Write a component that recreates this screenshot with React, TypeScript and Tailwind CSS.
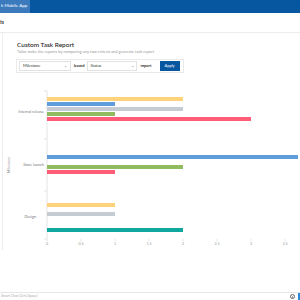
import React from "react";

const bars = [
  { y: 98, h: 4, v: 2, c: "#ffd27c" },
  { y: 103, h: 4, v: 1, c: "#5f9ddc" },
  { y: 108, h: 4, v: 2, c: "#c6ccd4" },
  { y: 113, h: 4, v: 1, c: "#90bb5f" },
  { y: 118, h: 4, v: 3, c: "#ff5d78" },
  { y: 156, h: 4, v: 4, c: "#5f9ddc" },
  { y: 166, h: 4, v: 2, c: "#90bb5f" },
  { y: 171, h: 4, v: 1, c: "#ff5d78" },
  { y: 204, h: 4, v: 1, c: "#ffd27c" },
  { y: 213, h: 4, v: 1, c: "#c6ccd4" },
  { y: 229, h: 4, v: 2, c: "#10a89e" },
];

const OFF = 80;
const X0 = 47;
const U = 68;

export default function App() {
  return (
    <div
      className="w-[300px] h-[300px] overflow-hidden bg-white flex flex-col"
      style={{ fontFamily: "Lato, 'Liberation Sans', sans-serif" }}
    >
      <div className="h-[13px] bg-[#0656a0] flex shrink-0">
        <div className="w-[30px] bg-[#3a7abd] flex items-center pl-[1px] text-[4.5px] text-white whitespace-nowrap overflow-hidden">
          k Mobile App
        </div>
      </div>
      <div className="h-[20px] border-b border-[#ececec] flex items-center text-[5px] font-bold text-[#333] pl-0 shrink-0">
        ts
      </div>
      <div className="ml-[2px] border-l border-[#eeeeee] h-[217px] shrink-0 flex flex-col">
        <div className="pl-[14px] pt-[7px] text-[6.5px] leading-[9px] text-[#222] font-medium">
          Custom Task Report
        </div>
        <div className="pl-[14px] text-[4px] leading-[6px] text-[#999]">
          Tailor make the reports by comparing any two criteria and generate task report
        </div>
        <div className="ml-[13px] mt-[4px] w-[168px] h-[14px] border border-[#eaeaea] flex items-center px-[2px] gap-[3px] text-[4px] text-[#333]">
          <div className="w-[52px] h-[10px] border border-[#e2e2e2] flex items-center justify-between px-[3px]">
            <span>Milestone</span>
            <span className="text-[4px] text-[#777]">⌄</span>
          </div>
          <span className="font-bold">based</span>
          <div className="w-[50px] h-[10px] border border-[#e2e2e2] flex items-center justify-between px-[2px]">
            <span>Status</span>
            <span className="text-[4px] text-[#777]">⌄</span>
          </div>
          <span className="font-bold">report</span>
          <div className="ml-[5px] w-[20px] h-[10px] bg-[#0656a0] text-white flex items-center justify-center text-[4px]">
            Apply
          </div>
        </div>
        <svg width="298" height="172" className="mt-[6px] block -ml-[3px]" style={{ fontFamily: "Lato, 'Liberation Sans', sans-serif" }}>
          <line x1={X0} y1={92 - OFF} x2={X0} y2={240 - OFF} stroke="#e4e4e4" strokeWidth="1" />
          {[92, 140, 192, 240].map((y) => (
            <line key={y} x1={X0 - 3} y1={y - OFF} x2={X0} y2={y - OFF} stroke="#d8d8d8" strokeWidth="0.7" />
          ))}
          {[0, 0.5, 1, 1.5, 2, 2.5, 3, 3.5].map((v) => (
            <g key={v}>
              <line x1={X0 + v * U} y1={240 - OFF} x2={X0 + v * U} y2={242 - OFF} stroke="#d8d8d8" strokeWidth="0.7" />
              <text x={X0 + v * U} y={246 - OFF} fontSize="3.6" fill="#999" textAnchor="middle">
                {v}
              </text>
            </g>
          ))}
          {bars.map((b, i) => (
            <rect key={i} x={X0} y={b.y - OFF} width={b.v * U} height={b.h} fill={b.c} />
          ))}
          <text x={44} y={114 - OFF} fontSize="3.8" fill="#777" textAnchor="end">Internal release</text>
          <text x={44} y={167 - OFF} fontSize="3.8" fill="#777" textAnchor="end">Store launch</text>
          <text x={36} y={219 - OFF} fontSize="3.8" fill="#777" textAnchor="end">Design</text>
          <text
            x={0}
            y={0}
            fontSize="3.8"
            fill="#999"
            textAnchor="middle"
            transform={`translate(10 ${166 - OFF}) rotate(-90)`}
          >
            Milestone
          </text>
        </svg>
      </div>
      <div className="flex-1" />
      <div className="h-[8px] border-t border-[#e6e6e6] flex items-center shrink-0">
        <span className="pl-[1px] text-[3.5px] text-[#aaa] flex-1">Smart Chat (Ctrl+Space)</span>
        <div className="w-[5px] h-[5px] rounded-full border border-[#666] flex items-center justify-center mr-[3px]">
          <div className="w-0 h-0 border-y-[1px] border-y-transparent border-l-[1.5px] border-l-[#444]" />
        </div>
        <div className="w-[2px] h-[8px] bg-[#2a8ad8]" />
      </div>
    </div>
  );
}
